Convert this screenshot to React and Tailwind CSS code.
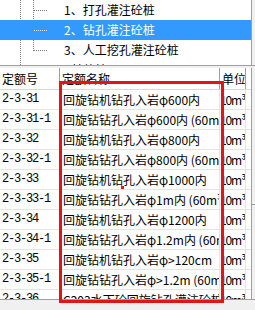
import React from 'react';

const rows = [
  ['2-3-31', '回旋钻机钻孔入岩φ600内'],
  ['2-3-31-1', '回旋钻钻孔入岩φ600内 (60m³以内)'],
  ['2-3-32', '回旋钻机钻孔入岩φ800内'],
  ['2-3-32-1', '回旋钻钻孔入岩φ800内 (60m³以内)'],
  ['2-3-33', '回旋钻机钻孔入岩φ1000内'],
  ['2-3-33-1', '回旋钻钻孔入岩φ1m内 (60m³以内)'],
  ['2-3-34', '回旋钻机钻孔入岩φ1200内'],
  ['2-3-34-1', '回旋钻钻孔入岩φ1.2m内 (60m³以内)'],
  ['2-3-35', '回旋钻机钻孔入岩φ>120cm'],
  ['2-3-35-1', '回旋钻钻孔入岩φ>1.2m (60m³以内)'],
  ['2-3-36', 'C203水下砼回旋钻孔灌注砼桩'],
];

// dotted tree connectors for one row
function Lines({ width, outer, inner, branch, color = '#808080' }) {
  return (
    <svg width={width} height="20" className="shrink-0" shapeRendering="crispEdges">
      {outer && <line x1="20.5" y1="0" x2="20.5" y2="20" stroke={color} strokeDasharray="1 1" />}
      {inner && <line x1="33.5" y1="0" x2="33.5" y2={inner === 'half' ? 11 : 20} stroke={color} strokeDasharray="1 1" />}
      {branch && <line x1="34" y1="10.5" x2="47" y2="10.5" stroke={color} strokeDasharray="1 1" />}
    </svg>
  );
}

export default function App() {
  return (
    <div className="relative w-[255px] h-[310px] overflow-hidden bg-[#f0f0f0] font-['Noto_Sans_CJK_SC',sans-serif] text-[12px] text-black">
      {/* tree panel */}
      <div className="flex h-[65px]">
        <div className="w-[252px] h-full bg-white border-r border-[#a0a0a0] overflow-hidden">
          <div className="flex items-center h-[20px] whitespace-nowrap">
            <Lines width={64} outer inner branch />
            <span>1、打孔灌注砼桩</span>
          </div>
          <div className="flex items-center h-[20px] bg-[#3399ff] text-white whitespace-nowrap">
            <Lines width={64} branch color="#d6e9ff" />
            <span>2、钻孔灌注砼桩</span>
          </div>
          <div className="flex items-center h-[20px] whitespace-nowrap">
            <Lines width={64} outer inner="half" branch />
            <span>3、人工挖孔灌注砼桩</span>
          </div>
          <div className="flex items-center h-[20px] whitespace-nowrap">
            <Lines width={47} outer />
            <span>三、其他桩</span>
          </div>
        </div>
      </div>

      <div className="h-[3px] border-t border-[#a0a0a0]" />

      {/* grid */}
      <div className="flex h-[231px]">
        <div className="w-[252px] h-full bg-white border-r border-[#a0a0a0] overflow-hidden">
          <div className="flex h-[22px] leading-[21px] border-b border-[#d8d8d8] whitespace-nowrap">
            <div className="w-[60px] pl-[2px] border-r border-[#a0a0a0]">定额号</div>
            <div className="w-[160px] pl-[2px] border-r border-[#a0a0a0]">定额名称</div>
            <div className="w-[26px] pl-[2px] border-r border-[#a0a0a0] overflow-hidden">单位</div>
          </div>
          {rows.map(([code, name]) => (
            <div key={code} className="flex h-[20px] leading-[19px] border-b border-[#e4e4e4] whitespace-nowrap">
              <div className="w-[60px] pl-[2px] border-r border-[#e4e4e4] font-['Liberation_Mono',monospace] tracking-[-1.2px]">{code}</div>
              <div className="w-[160px] pl-[3px] border-r border-[#e4e4e4] overflow-hidden">{name}</div>
              <div className="w-[26px] border-r border-[#e4e4e4] overflow-hidden tracking-[-1.1px]">10m³</div>
            </div>
          ))}
        </div>
        <div className="flex-1 flex flex-col">
          <div className="h-[136px]" />
          <div className="flex-1 border-t border-[#a0a0a0]" />
        </div>
      </div>

      <div className="h-[11px] border-t border-[#a0a0a0]" />

      {/* red annotation box */}
      <div className="absolute left-[59px] top-[81px] w-[165px] h-[222px] border-[3px] border-[#e41414]" />
      <div className="absolute left-[121px] top-[186px] w-[3px] h-[3px] bg-[#e41414]" />
    </div>
  );
}
